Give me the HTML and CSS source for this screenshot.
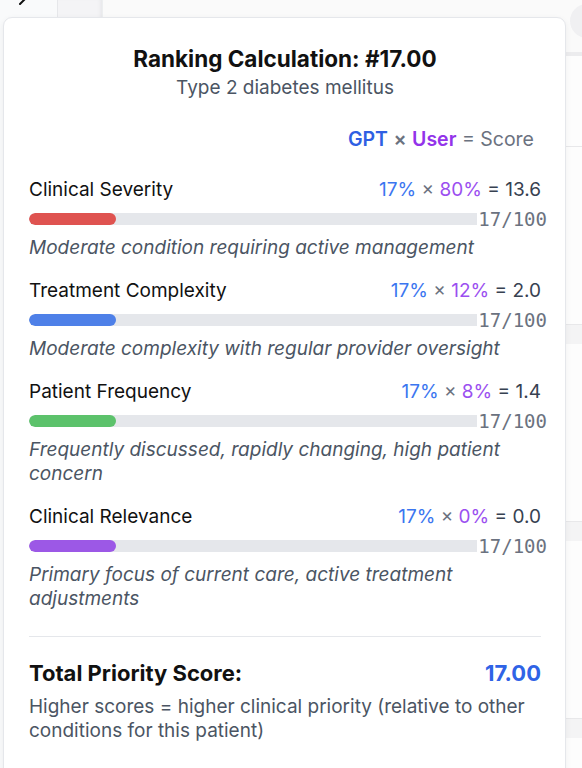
FILE: index.html
```html
<!DOCTYPE html>
<html lang="en">
<head>
<meta charset="utf-8">
<title>Ranking Calculation</title>
<link rel="stylesheet" href="styles.css">
</head>
<body>
<div class="app">
  <aside class="sidebar">
    <svg class="chev" width="12" height="12" viewBox="0 0 12 12" aria-hidden="true"><path d="M3 1 L8 6 L3 11" fill="none" stroke="#111" stroke-width="2" stroke-linecap="round" stroke-linejoin="round"/></svg>
  </aside>
  <div class="gutter"></div>
  <main class="main">
    <div class="topbar"><span class="avatar"></span></div>
    <div class="panel p1"></div>
    <div class="panel p2"></div>
    <div class="panel p3"></div>
    <div class="panel p4"></div>
    <div class="panel p5"></div>
  </main>
</div>

<section class="card">
  <header class="head">
    <h1 class="title">Ranking Calculation: #17.00</h1>
    <p class="subtitle">Type 2 diabetes mellitus</p>
  </header>

  <div class="legend">
    <span class="gpt">GPT</span> <span class="times">×</span> <span class="user">User</span> <span class="eq">= Score</span>
  </div>

  <div class="factor">
    <div class="frow">
      <span class="fname">Clinical Severity</span>
      <span class="fcalc"><span class="pg">17%</span> <span class="tx">×</span> <span class="pu">80%</span> <span class="res">= 13.6</span></span>
    </div>
    <div class="bar">
      <div class="track"><div class="fill red" style="width:17%"></div></div>
      <span class="frac">17/100</span>
    </div>
    <p class="desc">Moderate condition requiring active management</p>
  </div>

  <div class="factor">
    <div class="frow">
      <span class="fname">Treatment Complexity</span>
      <span class="fcalc"><span class="pg">17%</span> <span class="tx">×</span> <span class="pu">12%</span> <span class="res">= 2.0</span></span>
    </div>
    <div class="bar">
      <div class="track"><div class="fill blue" style="width:17%"></div></div>
      <span class="frac">17/100</span>
    </div>
    <p class="desc">Moderate complexity with regular provider oversight</p>
  </div>

  <div class="factor">
    <div class="frow">
      <span class="fname">Patient Frequency</span>
      <span class="fcalc"><span class="pg">17%</span> <span class="tx">×</span> <span class="pu">8%</span> <span class="res">= 1.4</span></span>
    </div>
    <div class="bar">
      <div class="track"><div class="fill green" style="width:17%"></div></div>
      <span class="frac">17/100</span>
    </div>
    <p class="desc">Frequently discussed, rapidly changing, high patient concern</p>
  </div>

  <div class="factor">
    <div class="frow">
      <span class="fname">Clinical Relevance</span>
      <span class="fcalc"><span class="pg">17%</span> <span class="tx">×</span> <span class="pu">0%</span> <span class="res">= 0.0</span></span>
    </div>
    <div class="bar">
      <div class="track"><div class="fill purple" style="width:17%"></div></div>
      <span class="frac">17/100</span>
    </div>
    <p class="desc">Primary focus of current care, active treatment adjustments</p>
  </div>

  <div class="total">
    <div class="trow">
      <span class="tlabel">Total Priority Score:</span>
      <span class="tval">17.00</span>
    </div>
    <p class="note">Higher scores = higher clinical priority (relative to other conditions for this patient)</p>
  </div>
</section>
</body>
</html>
```
FILE: styles.css
```css
* { box-sizing: border-box; }
html, body { margin: 0; padding: 0; }
body {
  width: 582px;
  height: 768px;
  overflow: hidden;
  background: #f7f7f8;
  font-family: Inter, "Noto Sans", sans-serif;
  position: relative;
}

/* background app */
.app { display: flex; height: 768px; }
.sidebar {
  width: 58px;
  background: #f9fafb;
  border-right: 1px solid #e6e7ea;
}
.chev {
  display: block;
  margin: -7px 0 0 17px;
}
.gutter {
  width: 44px;
  background: #f4f4f6;
  box-shadow: inset -4px 0 4px -3px #e2e3e6;
}
.main {
  flex: 1;
  background: #f4f4f5;
  border-top-left-radius: 10px;
  margin-top: -8px;
  border-left: 1px solid #eceef0;
  display: flex;
  flex-direction: column;
}
.topbar {
  flex: none;
  height: 64px;
  background: #fafafa;
  border-top-left-radius: 10px;
  border-bottom: 4px solid #ececee;
  display: flex;
  justify-content: flex-end;
  padding: 12px 0 0;
}
.avatar {
  width: 34px; height: 34px; border-radius: 50%;
  background: #f0f0f2;
  margin-right: -22px;
}
.panel { background: #fdfdfd; border-bottom: 1px solid #e8e8ea; flex: none; }
.p1 { height: 91px; }
.p2 { height: 178px; }
.p3 { height: 178px; margin-top: 19px; }
.p4 { height: 178px; margin-top: 19px; }
.p5 { height: 60px; margin-top: 19px; }

/* card */
.card {
  position: absolute;
  left: 3px;
  top: 17px;
  width: 563px;
  height: 780px;
  background: #fff;
  border: 1px solid #e5e7eb;
  border-radius: 9px;
  box-shadow: 0 2px 6px rgba(0,0,0,0.06);
  padding: 27px 24px 0 25px;
}
.head { text-align: center; }
.title {
  margin: 0;
  font-size: 22.5px;
  line-height: 28px;
  font-weight: 700;
  color: #111;
}
.subtitle {
  margin: 3px 0 0;
  font-size: 19px;
  line-height: 24px;
  color: #4b5563;
}
.legend {
  margin-top: 27px;
  text-align: right;
  padding-right: 7px;
  font-size: 19.5px;
  line-height: 24px;
  color: #6b7280;
}
.gpt { color: #2f5fe3; font-weight: 600; }
.user { color: #9333ea; font-weight: 600; }
.times { color: #6b7280; font-weight: 600; }
.eq { color: #6b7280; }

.factor { margin-top: 27px; }
.factor + .factor { margin-top: 19px; }
.frow {
  display: flex;
  justify-content: space-between;
  align-items: center;
  font-size: 19px;
  line-height: 24px;
}
.fname { color: #111; }
.fcalc { color: #374151; }
.pg { color: #3b76f0; }
.pu { color: #9b4ff0; }
.tx { color: #6b7280; }
.res { color: #374151; }

.bar {
  display: grid;
  margin-top: 4px;
  height: 24px;
  align-items: center;
}
.track, .frac { grid-area: 1 / 1; }
.track {
  height: 12px;
  background: #e5e7eb;
  border-radius: 6px;
  overflow: hidden;
}
.fill { height: 100%; border-radius: 6px; }
.red { background: #df5350; }
.blue { background: #4e80e8; }
.green { background: #5cc26b; }
.purple { background: #9c58e6; }
.frac {
  justify-self: end;
  margin-right: -6px;
  padding-left: 1px;
  background: #fff;
  font-family: "DejaVu Sans Mono", "Liberation Mono", monospace;
  font-size: 19px;
  line-height: 24px;
  color: #6b7280;
  padding-top: 1px;
}
.desc {
  margin: 6px 0 0;
  font-size: 19px;
  line-height: 24px;
  font-style: italic;
  color: #4b5563;
}

.total {
  margin-top: 25px;
  border-top: 1px solid #e5e7eb;
  padding-top: 22px;
}
.trow {
  display: flex;
  justify-content: space-between;
  align-items: center;
  font-size: 22px;
  line-height: 28px;
  font-weight: 700;
}
.tlabel { color: #111; }
.tval { color: #2f63e6; }
.note {
  margin: 8px 0 0;
  font-size: 19px;
  line-height: 24px;
  color: #4b5563;
}
```
